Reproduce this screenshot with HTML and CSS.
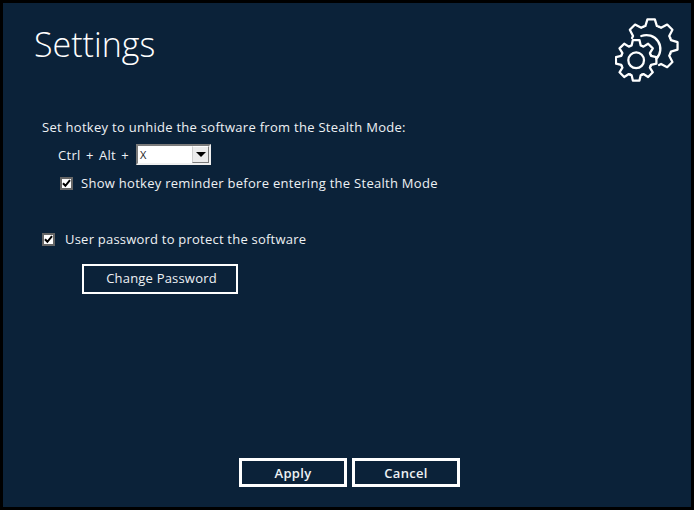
FILE: index.html
```html
<!DOCTYPE html>
<html lang="en">
<head>
<meta charset="utf-8">
<title>Settings</title>
<link rel="stylesheet" href="styles.css">
</head>
<body>
<main class="window">
  <header class="header">
    <h1 class="title">Settings</h1>
    <svg class="gear" viewBox="0 0 62 62" width="64" height="64" aria-hidden="true">
      <defs>
        <path id="st" d="M-5.74-13.86L-4.4-14.4L-3.2-19.6H3.2L4.4-14.4L5.74-13.86"/>
        <path id="bt" d="M-7.65-18.48L-5.6-19.2L-3.6-25.6H3.6L5.6-19.2L7.65-18.48"/>
      </defs>
      <g class="gear-lines">
        <g transform="translate(35 27)">
          <use href="#bt" transform="rotate(-45)"/>
          <use href="#bt"/>
          <use href="#bt" transform="rotate(45)"/>
          <use href="#bt" transform="rotate(90)"/>
          <use href="#bt" transform="rotate(135)"/>
          <path d="M-9.5-9.5A13.4 13.4 0 0 1 5 12.4"/>
        </g>
        <g transform="translate(20.5 41)">
          <use href="#st"/>
          <use href="#st" transform="rotate(45)"/>
          <use href="#st" transform="rotate(90)"/>
          <use href="#st" transform="rotate(135)"/>
          <use href="#st" transform="rotate(180)"/>
          <use href="#st" transform="rotate(225)"/>
          <use href="#st" transform="rotate(270)"/>
          <use href="#st" transform="rotate(315)"/>
          <circle r="7.6"/>
        </g>
      </g>
    </svg>
  </header>

  <section class="hotkey">
    <p class="label">Set hotkey to unhide the software from the Stealth Mode:</p>
    <div class="combo-row">
      <span class="combo-label">Ctrl + Alt +</span>
      <div class="combo">
        <span class="combo-value">X</span>
        <span class="combo-btn"><i class="arrow"></i></span>
      </div>
    </div>
    <label class="check check-reminder">
      <span class="box"><svg viewBox="0 0 9 9" width="9" height="9"><path d="M1 4.2L3.4 6.8L8 1.2" /></svg></span>
      <span>Show hotkey reminder before entering the Stealth Mode</span>
    </label>
  </section>

  <section class="password">
    <label class="check">
      <span class="box"><svg viewBox="0 0 9 9" width="9" height="9"><path d="M1 4.2L3.4 6.8L8 1.2" /></svg></span>
      <span class="password-text">User password to protect the software</span>
    </label>
    <button class="btn btn-change" type="button">Change Password</button>
  </section>

  <footer class="footer">
    <button class="btn btn-action" type="button">Apply</button>
    <button class="btn btn-action" type="button">Cancel</button>
  </footer>
</main>
</body>
</html>
```
FILE: styles.css
```css
* { box-sizing: border-box; }
html, body { margin: 0; height: 100%; }
body { background: #000; font-family: "Open Sans", "Noto Sans", sans-serif; }
.window {
  width: 694px;
  height: 510px;
  border: 3px solid #000;
  background: #0b2239;
  color: #eef1f4;
  font-size: 13px;
  letter-spacing: 0.28px;
  display: flex;
  flex-direction: column;
}
.header {
  display: flex;
  justify-content: space-between;
  align-items: flex-start;
  height: 107px;
  padding: 15px 12px 0 31px;
}
.title {
  margin: 0;
  font-size: 34px;
  line-height: 52px;
  font-weight: 300;
  letter-spacing: 0;
  color: #fff;
}
.gear-lines { fill: none; stroke: #fff; stroke-width: 2.2; stroke-linejoin: round; stroke-linecap: round; }
.hotkey { padding-left: 39px; }
.label { margin: 7px 0 0; line-height: 20px; }
.combo-row { display: flex; align-items: center; gap: 7px; margin: 7px 0 0 16px; height: 21px; }
.combo-label { word-spacing: 1.7px; }
.combo {
  width: 75px;
  height: 21px;
  display: flex;
  border: 2px solid;
  border-color: #7b7b7b #f0f0f0 #f0f0f0 #7b7b7b;
  background: #fff;
}
.combo-value {
  flex: 1;
  color: #222;
  font-size: 11px;
  letter-spacing: 0;
  line-height: 17px;
  padding-left: 2px;
}
.combo-btn {
  width: 17px;
  background: #ececec;
  border: 1px solid;
  border-color: #fff #7b7b7b #7b7b7b #cfcfcf;
  display: flex;
  align-items: center;
  justify-content: center;
}
.arrow { width: 0; height: 0; border-style: solid; border-color: #000 transparent transparent; border-width: 5px 5px 0; }
.check { display: flex; align-items: center; line-height: 20px; }
.check-reminder { margin: 8px 0 0 18px; gap: 8px; }
.box {
  width: 13px;
  height: 13px;
  flex: none;
  background: #fff;
  border: 2px solid #666;
  display: flex;
  align-items: center;
  justify-content: center;
}
.box svg { fill: none; stroke: #000; stroke-width: 2; }
.password { padding-left: 39px; margin-top: 36px; }
.password .check { gap: 10px; }
.password-text { letter-spacing: 0.22px; }
.btn {
  display: block;
  background: transparent;
  border: 2px solid #fff;
  color: #eef1f4;
  font: inherit;
  padding: 0;
}
.btn-change { width: 156px; height: 30px; margin: 15px 0 0 40px; letter-spacing: 0.2px; padding: 0 0 2px 3px; }
.footer { margin-top: auto; margin-bottom: 20px; padding-left: 5px; display: flex; justify-content: center; gap: 5px; }
.btn-action { width: 108px; height: 29px; border-width: 3px; font-weight: 600; letter-spacing: 0.28px; }
```
